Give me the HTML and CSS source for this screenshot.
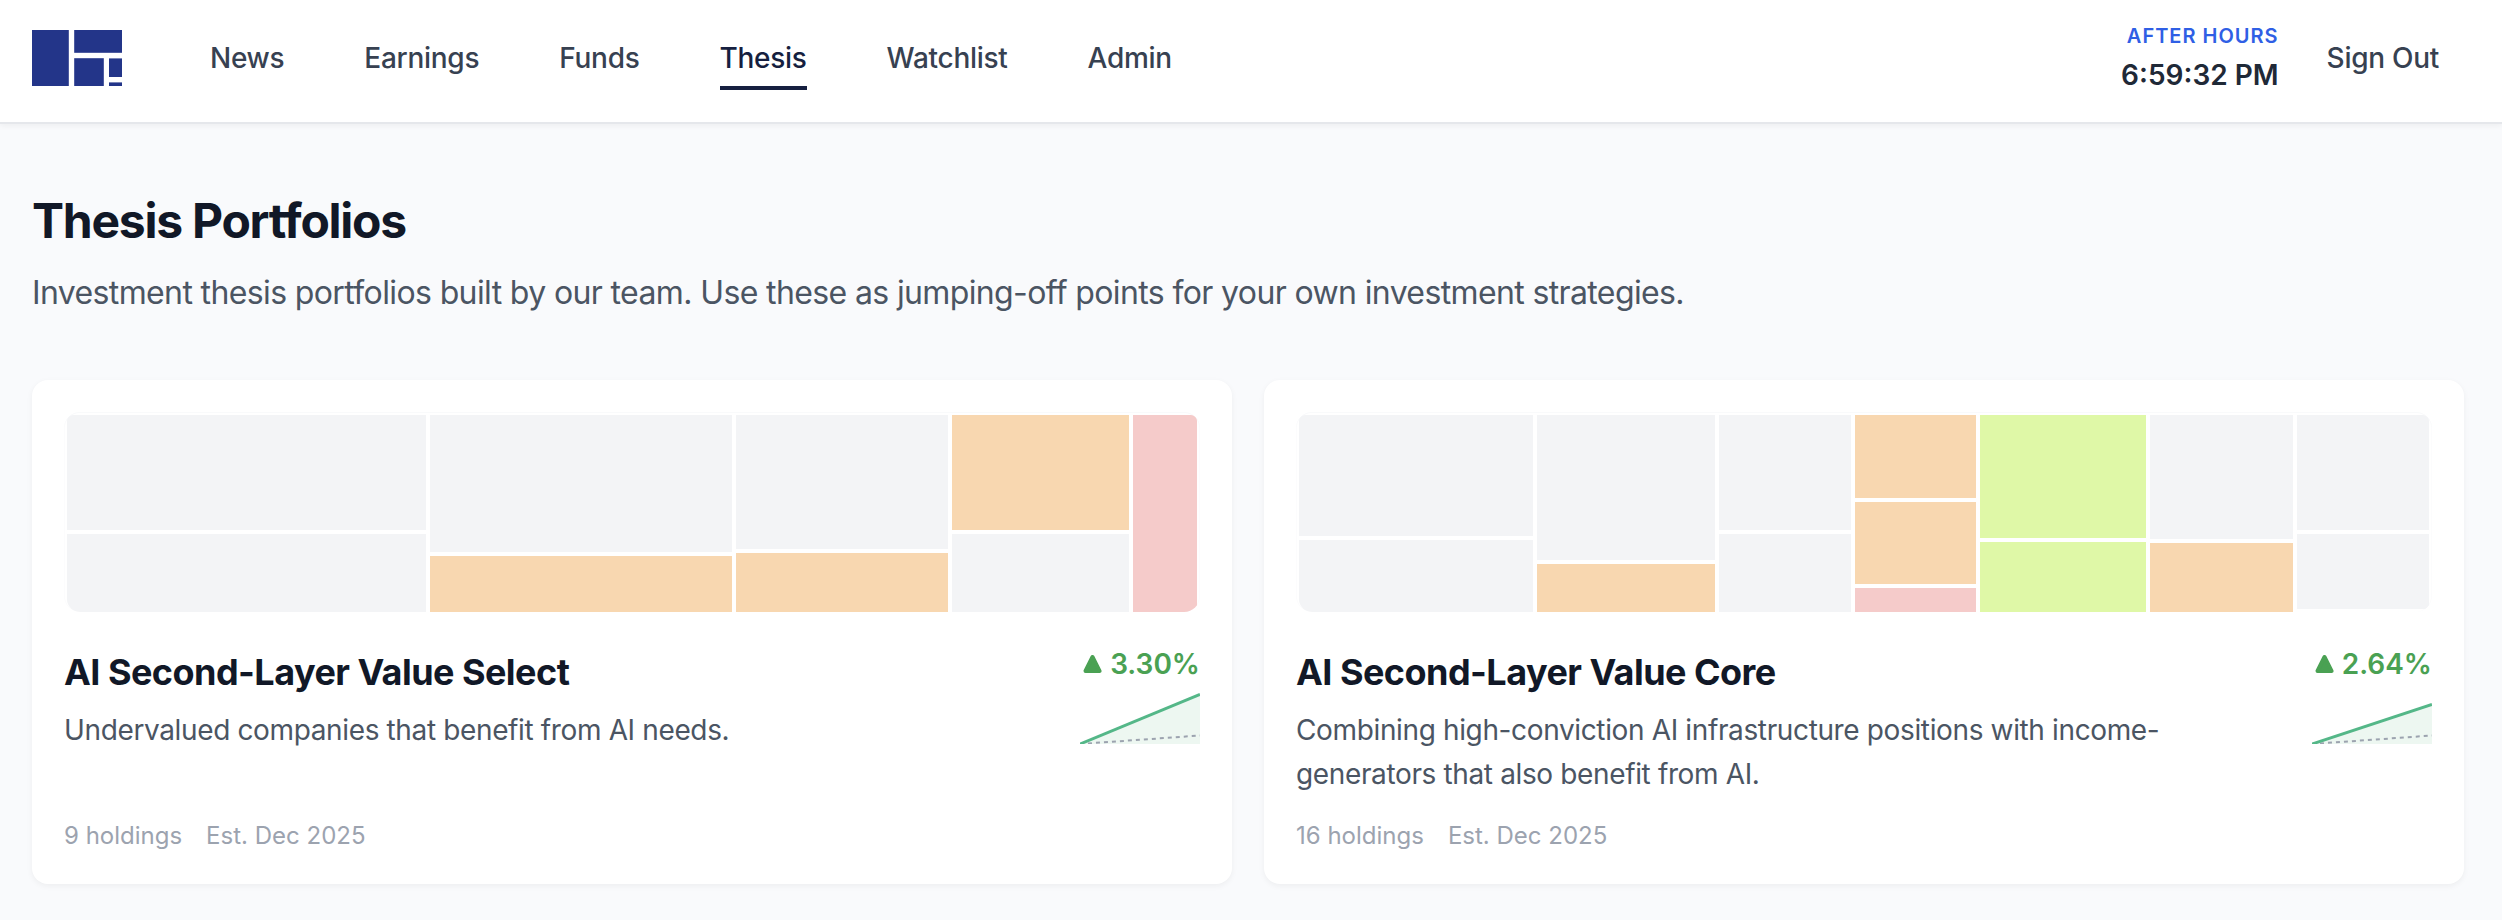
FILE: index.html
```html
<!DOCTYPE html>
<html lang="en">
<head>
    <meta charset="UTF-8">
    <meta name="viewport" content="width=device-width, initial-scale=1.0">
    <title>Thesis Portfolios</title>
    <link rel="stylesheet" href="styles.css">
</head>
<body>

    <header class="site-header">
        <a class="logo" href="#" aria-label="Home">
            <svg width="90" height="56" viewBox="0 0 90 56" fill="#233589">
                <rect x="0" y="0" width="36.8" height="56"/>
                <rect x="42.2" y="0" width="47.8" height="22.8"/>
                <rect x="42.2" y="28.2" width="29.6" height="27.8"/>
                <rect x="77" y="28.4" width="13" height="18.6"/>
                <rect x="77" y="52.4" width="13" height="3.6"/>
            </svg>
        </a>
        <nav class="main-nav">
            <a href="#">News</a>
            <a href="#">Earnings</a>
            <a href="#">Funds</a>
            <a href="#" class="active">Thesis</a>
            <a href="#">Watchlist</a>
            <a href="#">Admin</a>
        </nav>
        <div class="clock">
            <div class="clock-label">AFTER HOURS</div>
            <div class="clock-time">6:59:32 PM</div>
        </div>
        <a class="sign-out" href="#">Sign Out</a>
    </header>

    <main>
        <h1>Thesis Portfolios</h1>
        <p class="intro">Investment thesis portfolios built by our team. Use these as jumping-off points for your own investment strategies.</p>

        <div class="portfolios">

            <article class="card">
                <div class="treemap">
                    <div class="col" style="flex-grow: 359">
                        <div class="cell" style="flex-grow: 115"></div>
                        <div class="cell" style="flex-grow: 78"></div>
                    </div>
                    <div class="col" style="flex-grow: 302">
                        <div class="cell" style="flex-grow: 137"></div>
                        <div class="cell orange" style="flex-grow: 56"></div>
                    </div>
                    <div class="col" style="flex-grow: 211.5">
                        <div class="cell" style="flex-grow: 134"></div>
                        <div class="cell orange" style="flex-grow: 59"></div>
                    </div>
                    <div class="col" style="flex-grow: 177.5">
                        <div class="cell orange" style="flex-grow: 115"></div>
                        <div class="cell" style="flex-grow: 78"></div>
                    </div>
                    <div class="col" style="flex-grow: 64">
                        <div class="cell red" style="flex-grow: 197"></div>
                    </div>
                </div>
                <div class="card-body">
                    <div class="card-text">
                        <h2>AI Second-Layer Value Select</h2>
                        <p>Undervalued companies that benefit from AI needs.</p>
                    </div>
                    <div class="performance">
                        <div class="change">
                            <svg width="19" height="18" viewBox="0 0 19 18"><path d="M9.5 2 L16.5 16 H2.5 Z" fill="currentColor" stroke="currentColor" stroke-width="4" stroke-linejoin="round"/></svg>
                            <span>3.30%</span>
                        </div>
                        <svg class="spark" width="120" height="52" viewBox="0 0 120 52">
                            <path class="spark-area" d="M0 52 L120 2.5 V52 Z"/>
                            <path class="spark-base" d="M0 52 L120 43.5"/>
                            <path class="spark-line" d="M0 52 L120 2.5"/>
                        </svg>
                    </div>
                </div>
                <div class="meta">
                    <span>9 holdings</span>
                    <span>Est. Dec 2025</span>
                </div>
            </article>

            <article class="card">
                <div class="treemap">
                    <div class="col" style="flex-grow: 234">
                        <div class="cell" style="flex-grow: 120.5"></div>
                        <div class="cell" style="flex-grow: 72.5"></div>
                    </div>
                    <div class="col" style="flex-grow: 177.7">
                        <div class="cell" style="flex-grow: 144.5"></div>
                        <div class="cell orange" style="flex-grow: 48.5"></div>
                    </div>
                    <div class="col" style="flex-grow: 132">
                        <div class="cell" style="flex-grow: 115"></div>
                        <div class="cell" style="flex-grow: 78"></div>
                    </div>
                    <div class="col" style="flex-grow: 121">
                        <div class="cell orange" style="flex-grow: 82.5"></div>
                        <div class="cell orange" style="flex-grow: 82.5"></div>
                        <div class="cell red" style="flex-grow: 24"></div>
                    </div>
                    <div class="col" style="flex-grow: 165.8">
                        <div class="cell green" style="flex-grow: 123"></div>
                        <div class="cell green" style="flex-grow: 70"></div>
                    </div>
                    <div class="col" style="flex-grow: 143.7">
                        <div class="cell" style="flex-grow: 124"></div>
                        <div class="cell orange" style="flex-grow: 69"></div>
                    </div>
                    <div class="col col-inset" style="flex-grow: 131.8">
                        <div class="cell" style="flex-grow: 115"></div>
                        <div class="cell" style="flex-grow: 75"></div>
                    </div>
                </div>
                <div class="card-body">
                    <div class="card-text">
                        <h2>AI Second-Layer Value Core</h2>
                        <p>Combining high-conviction AI infrastructure positions with income-generators that also benefit from AI.</p>
                    </div>
                    <div class="performance">
                        <div class="change">
                            <svg width="19" height="18" viewBox="0 0 19 18"><path d="M9.5 2 L16.5 16 H2.5 Z" fill="currentColor" stroke="currentColor" stroke-width="4" stroke-linejoin="round"/></svg>
                            <span>2.64%</span>
                        </div>
                        <svg class="spark" width="120" height="52" viewBox="0 0 120 52">
                            <path class="spark-area" d="M0 52 L120 12.5 V52 Z"/>
                            <path class="spark-base" d="M0 52 L120 43.5"/>
                            <path class="spark-line" d="M0 52 L120 12.5"/>
                        </svg>
                    </div>
                </div>
                <div class="meta">
                    <span>16 holdings</span>
                    <span>Est. Dec 2025</span>
                </div>
            </article>

        </div>
    </main>

</body>
</html>
```
FILE: styles.css
```css
/* --- Base --- */
* { box-sizing: border-box; }

body {
    margin: 0;
    background: #f9fafc;
    color: #111827;
    font-family: Inter, "Liberation Sans", sans-serif;
    font-size: 28px;
}
h1, h2, p { margin: 0; }
a { color: inherit; text-decoration: none; }
svg { display: block; }

/* --- Header --- */
.site-header {
    display: flex; align-items: center;
    height: 124px;
    padding: 0 63px 6px 32px;
    background: #fff;
    border-bottom: 2px solid #e5e7eb;
    box-shadow: 0 2px 6px rgba(0, 0, 0, 0.05);
    color: #374151;
    font-weight: 500;
    line-height: 40px;
}
.main-nav {
    display: flex; gap: 80px;
    margin-left: 88px;
    letter-spacing: -0.01em;
}
.main-nav a {
    padding: 12px 0 8px;
    border-bottom: 4px solid transparent;
}
.main-nav .active {
    color: #161f40;
    border-bottom-color: #161f40;
}
.clock {
    margin-left: auto;
    text-align: right;
}
.clock-label {
    margin-bottom: 4px;
    color: #2f5fe5;
    font-size: 20px; font-weight: 600; line-height: 30px;
    letter-spacing: 1px;
}
.clock-time {
    color: #1f2937;
    font-weight: 600;
}
.sign-out {
    margin-left: 48px;
    letter-spacing: -0.01em;
}

/* --- Page intro --- */
main { padding: 67px 38px 36px 32px; }

h1 {
    font-size: 48px; line-height: 60px;
    letter-spacing: -0.026em;
}
.intro {
    margin: 18px 0 63px;
    color: #4b5563;
    font-size: 32px; line-height: 48px;
    letter-spacing: -0.0195em;
}

/* --- Cards --- */
.portfolios {
    display: grid;
    grid-template-columns: 1fr 1fr;
    gap: 32px;
}
.card {
    display: flex; flex-direction: column;
    padding: 32px;
    background: #fff;
    border-radius: 16px;
    box-shadow: 0 2px 6px rgba(0, 0, 0, 0.05);
}
.card-body {
    display: flex; justify-content: space-between; gap: 32px;
    margin-top: 32px;
}
.card-text { padding-top: 4px; }
h2 {
    margin-bottom: 12px;
    font-size: 36px; line-height: 48px;
    letter-spacing: -0.015em;
}
.card-text p {
    color: #4b5563;
    line-height: 44px;
    letter-spacing: -0.013em;
}
.meta {
    display: flex; gap: 24px;
    margin-top: auto; padding-top: 24px;
    color: #9ca3af;
    font-size: 24px; line-height: 32px;
}

/* --- Treemap --- */
.treemap {
    display: flex; gap: 4px;
    height: 200px;
    padding: 3px 3px 0;
    border-radius: 16px;
    box-shadow: inset 0 1px #f9fafb, inset 1px 0 #fcfcfd, inset -1px 0 #fcfcfd;
    overflow: hidden;
}
.col {
    display: flex; flex-direction: column; gap: 4px;
    flex-basis: 0;
}
.cell {
    flex-basis: 0;
    background: #f3f4f6;
}
.col-inset { padding-bottom: 3px; }
.col:first-child .cell:last-child { border-bottom-left-radius: 13px; }
.col:first-child .cell:first-child { border-top-left-radius: 6px; }
.col:last-child .cell:first-child { border-top-right-radius: 6px; }
.orange { background: #f8d7b0; }
.red { background: #f5cbca; }
.green { background: #dff8a7; }

/* --- Performance --- */
.performance { flex: none; }
.change {
    display: flex; align-items: center; justify-content: flex-end; gap: 8px;
    color: #4aa153;
    font-weight: 600; line-height: 40px;
}
.spark { margin-top: 8px; }
.spark-area { fill: #edf7f1; }
.spark-line { fill: none; stroke: #54b788; stroke-width: 3; }
.spark-base { fill: none; stroke: #9ca3af; stroke-width: 2; stroke-dasharray: 4 4; }
```
